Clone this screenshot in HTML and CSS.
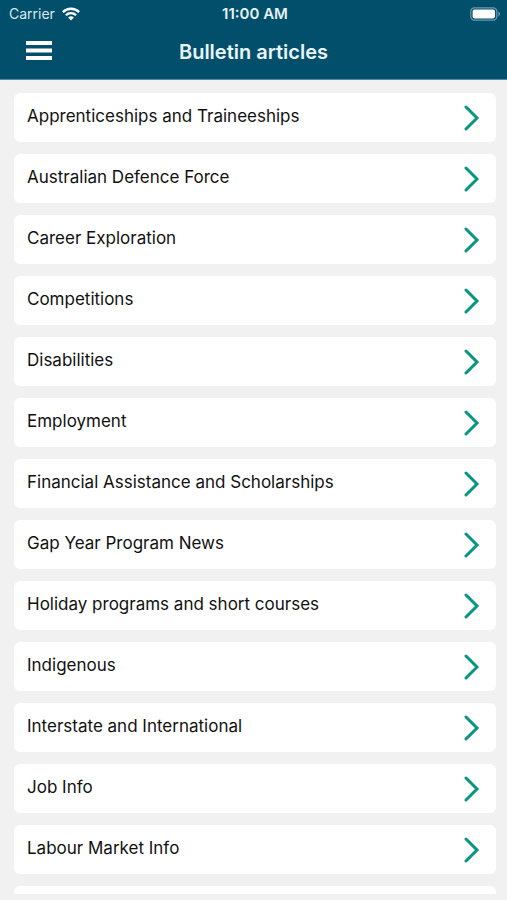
FILE: index.html
```html
<!DOCTYPE html>
<html lang="en">
<head>
<meta charset="utf-8">
<meta name="viewport" content="width=device-width, initial-scale=1">
<title>Bulletin articles</title>
<link rel="stylesheet" href="styles.css">
</head>
<body>
<svg class="sprite" aria-hidden="true">
  <symbol id="chevron" viewBox="0 0 16 26"><path d="M2 2 13 13 2 24" fill="none" stroke="currentColor" stroke-width="3" stroke-linecap="round"/></symbol>
</svg>
<header class="header">
  <div class="status">
    <div class="carrier">
      <span>Carrier</span>
      <svg class="wifi" viewBox="0 0 18 14" aria-hidden="true">
        <g fill="none" stroke="currentColor" stroke-width="2.3">
          <path d="M.9 5.1a11.5 11.5 0 0 1 16.2 0"/>
          <path d="M3.9 8.2a7.2 7.2 0 0 1 10.2 0"/>
        </g>
        <path d="M9 13.6 6.1 10.6a4.1 4.1 0 0 1 5.8 0z" fill="currentColor"/>
      </svg>
    </div>
    <time class="clock">11:00 AM</time>
    <svg class="battery" viewBox="0 0 31 14" aria-hidden="true">
      <rect x=".8" y=".8" width="26" height="12.4" rx="3.6" fill="none" stroke="#6f9bb0" stroke-width="1.2"/>
      <rect x="2.6" y="2.6" width="22.4" height="8.8" rx="1.8" fill="#fff"/>
      <path d="M28.4 4.8c2.2.8 2.2 3.6 0 4.4z" fill="#6f9bb0"/>
    </svg>
  </div>
  <div class="bar">
    <button class="menu" type="button" aria-label="Menu">
      <svg viewBox="0 0 26 21" aria-hidden="true"><path d="M0 0h26v4H0zM0 7.5h26v4H0zM0 15h26v4H0z" fill="currentColor"/></svg>
    </button>
    <h1 class="title">Bulletin articles</h1>
  </div>
</header>
<main class="list">
  <a class="card" href="#"><span>Apprenticeships and Traineeships</span><svg class="chevron" aria-hidden="true"><use href="#chevron"/></svg></a>
  <a class="card" href="#"><span>Australian Defence Force</span><svg class="chevron" aria-hidden="true"><use href="#chevron"/></svg></a>
  <a class="card" href="#"><span>Career Exploration</span><svg class="chevron" aria-hidden="true"><use href="#chevron"/></svg></a>
  <a class="card" href="#"><span>Competitions</span><svg class="chevron" aria-hidden="true"><use href="#chevron"/></svg></a>
  <a class="card" href="#"><span>Disabilities</span><svg class="chevron" aria-hidden="true"><use href="#chevron"/></svg></a>
  <a class="card" href="#"><span>Employment</span><svg class="chevron" aria-hidden="true"><use href="#chevron"/></svg></a>
  <a class="card" href="#"><span>Financial Assistance and Scholarships</span><svg class="chevron" aria-hidden="true"><use href="#chevron"/></svg></a>
  <a class="card" href="#"><span>Gap Year Program News</span><svg class="chevron" aria-hidden="true"><use href="#chevron"/></svg></a>
  <a class="card" href="#"><span>Holiday programs and short courses</span><svg class="chevron" aria-hidden="true"><use href="#chevron"/></svg></a>
  <a class="card" href="#"><span>Indigenous</span><svg class="chevron" aria-hidden="true"><use href="#chevron"/></svg></a>
  <a class="card" href="#"><span>Interstate and International</span><svg class="chevron" aria-hidden="true"><use href="#chevron"/></svg></a>
  <a class="card" href="#"><span>Job Info</span><svg class="chevron" aria-hidden="true"><use href="#chevron"/></svg></a>
  <a class="card" href="#"><span>Labour Market Info</span><svg class="chevron" aria-hidden="true"><use href="#chevron"/></svg></a>
  <div class="card"></div>
</main>
</body>
</html>
```
FILE: styles.css
```css
* {
  box-sizing: border-box;
}

body {
  margin: 0;
  height: 100vh;
  display: flex;
  flex-direction: column;
  padding-bottom: 6px;
  background: #f1f1f1;
  color: #111;
  font-family: Inter, "Liberation Sans", sans-serif;
  font-size: 17px;
  line-height: 20px;
}

.sprite {
  display: none;
}

.header {
  flex: none;
  background: #024f6c;
  color: #fff;
  border-bottom: 1px solid #4f8ba3;
}

.status {
  display: grid;
  grid-template-columns: 1fr auto 1fr;
  align-items: center;
  height: 28px;
  padding: 0 6px 0 9px;
  font-size: 14px;
}

.carrier {
  display: flex;
  align-items: center;
  gap: 7px;
  color: #dce8ee;
}

.wifi {
  width: 18px;
  height: 14px;
  color: #fff;
}

.clock {
  font-size: 15px;
  font-weight: 600;
  color: #e6f0f4;
}

.battery {
  justify-self: end;
  width: 31px;
  height: 14px;
}

.bar {
  display: grid;
  grid-template-columns: 1fr auto 1fr;
  align-items: center;
  height: 51px;
  padding: 0 26px 4px;
}

.menu {
  justify-self: start;
  display: block;
  padding: 0;
  border: 0;
  background: none;
  color: #fff;
}

.menu svg {
  display: block;
  width: 26px;
  height: 21px;
}

.title {
  margin: 0;
  font-size: 20px;
  font-weight: 600;
  line-height: 24px;
  color: #e9f5fa;
}

.list {
  flex: 1;
  min-height: 0;
  overflow: hidden;
  display: flex;
  flex-direction: column;
  gap: 12px;
  padding: 13px 11px 0 14px;
}

.card {
  flex: none;
  display: flex;
  align-items: center;
  justify-content: space-between;
  height: 49px;
  padding: 0 16px 0 13px;
  border-radius: 6px;
  background: #fff;
  color: inherit;
  text-decoration: none;
}

.card span {
  padding-bottom: 4px;
}

.chevron {
  width: 16px;
  height: 26px;
  color: #069683;
}
```
